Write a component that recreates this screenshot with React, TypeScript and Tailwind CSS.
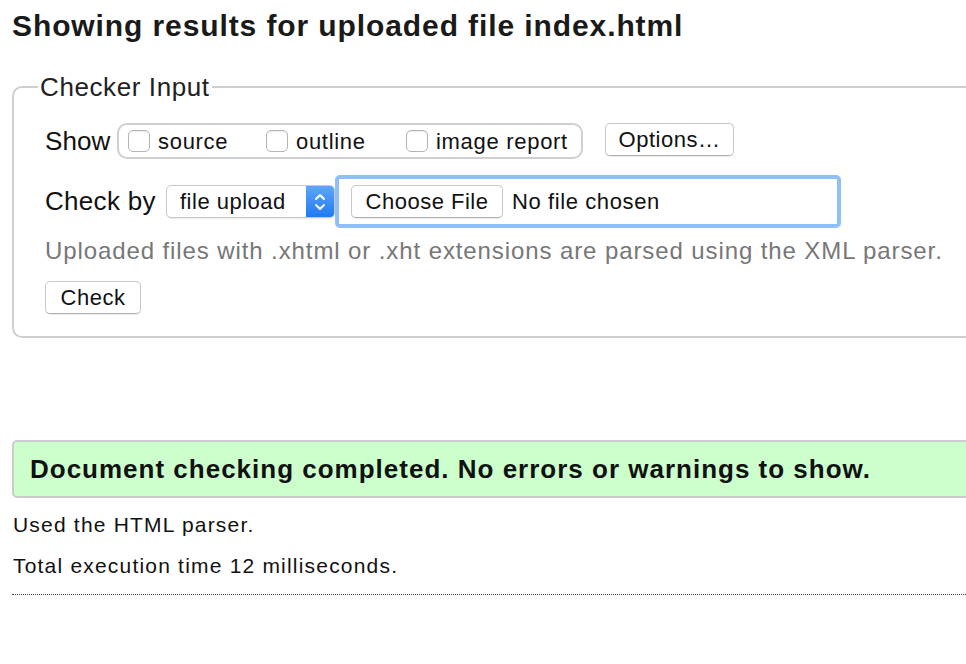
const CHECKS = [
  { label: "source", width: "w-[138px]" },
  { label: "outline", width: "w-[140px]" },
  { label: "image report", width: "" },
];

function Checkbox() {
  return <span className="inline-block w-[22px] h-[22px] rounded-[5px] border border-[#b3b3b3] bg-white shadow-[inset_0_1px_1px_rgba(0,0,0,0.08)] mr-[8px] shrink-0" />;
}

function MacButton({ children, className = "" }: { children: React.ReactNode; className?: string }) {
  return (
    <span
      className={`inline-flex items-center justify-center h-[33px] rounded-[5px] border border-[#c8c8c8] border-b-[#b0b0b0] bg-white text-[22px] tracking-[0.5px] text-[#111] shadow-[0_1px_1px_rgba(0,0,0,0.08)] ${className}`}
    >
      {children}
    </span>
  );
}

export default function App() {
  return (
    <div className="w-[966px] h-[664px] overflow-hidden bg-white font-['Liberation_Sans',Arial,sans-serif] text-[#111]">
      <div className="w-[1010px] pl-[12px]">
        <h1 className="pt-[6px] text-[30px] font-bold leading-[40px] tracking-[0.9px] text-[#1a1a1a]">
          Showing results for uploaded file index.html
        </h1>

        {/* Checker input fieldset */}
        <fieldset className="mt-[27px] rounded-[10px] border-2 border-[#cfcfcf] pl-[31px] pr-4 pb-[22px]">
          <legend className="-ml-[7px] px-[2px] text-[26px] leading-[28px] tracking-[0.6px] text-[#222]">Checker Input</legend>

          <div className="mt-[22px] flex items-center h-[36px]">
            <span className="w-[72px] text-[26px] tracking-[0.1px]">Show</span>
            <div className="flex items-center h-[36px] w-[466px] rounded-[10px] border-2 border-[#cfcfcf] pl-[9px]">
              {CHECKS.map((c) => (
                <label key={c.label} className={`flex items-center text-[22px] tracking-[0.7px] ${c.width}`}>
                  <Checkbox />
                  {c.label}
                </label>
              ))}
            </div>
            <MacButton className="ml-[22px] w-[129px] -mt-[3px]">Options…</MacButton>
          </div>

          <div className="mt-[16px] flex items-center h-[53px]">
            <span className="w-[121px] text-[26px] tracking-[0.3px]">Check by</span>
            <div className="flex h-[33px] w-[169px] rounded-[5px] border border-[#c8c8c8] bg-white shadow-[0_1px_1px_rgba(0,0,0,0.08)] overflow-hidden">
              <span className="flex-1 pl-[13px] text-[22px] tracking-[0.5px] leading-[31px] text-[#111]">file upload</span>
              <span className="w-[28px] bg-gradient-to-b from-[#5ca6fc] to-[#1e79f0] flex items-center justify-center">
                <svg width="12" height="20" viewBox="0 0 12 20" fill="none" stroke="white" strokeWidth="2" strokeLinecap="round" strokeLinejoin="round">
                  <path d="M2 7 L6 3 L10 7" />
                  <path d="M2 13 L6 17 L10 13" />
                </svg>
              </span>
            </div>
            <div className="flex items-center h-[53px] w-[506px] rounded-[5px] border-4 border-[#8fbff9] bg-white pl-[12px]">
              <MacButton className="w-[152px]">Choose File</MacButton>
              <span className="ml-[9px] text-[22px] tracking-[0.6px] text-[#111]">No file chosen</span>
            </div>
          </div>

          <p className="mt-[7px] text-[24px] text-[#777] leading-[32px] tracking-[0.9px]">
            Uploaded files with .xhtml or .xht extensions are parsed using the XML parser.
          </p>

          <div className="mt-[14px] flex">
            <MacButton className="w-[96px]">Check</MacButton>
          </div>
        </fieldset>

        {/* Result */}
        <div className="mt-[102px] h-[58px] flex items-center rounded-[5px] border-2 border-[#cccccc] bg-[#ccffcc] pl-[16px]">
          <span className="text-[26px] font-bold tracking-[1px] text-[#111]">
            Document checking completed. No errors or warnings to show.
          </span>
        </div>

        <p className="mt-[15px] pl-[1px] text-[21px] leading-[24px] tracking-[1.2px]">Used the HTML parser.</p>
        <p className="mt-[17px] pl-[1px] text-[21px] leading-[24px] tracking-[1.2px]">Total execution time 12 milliseconds.</p>

        <div className="mt-[16px] border-t border-dotted border-[#444]" />
      </div>
    </div>
  );
}
